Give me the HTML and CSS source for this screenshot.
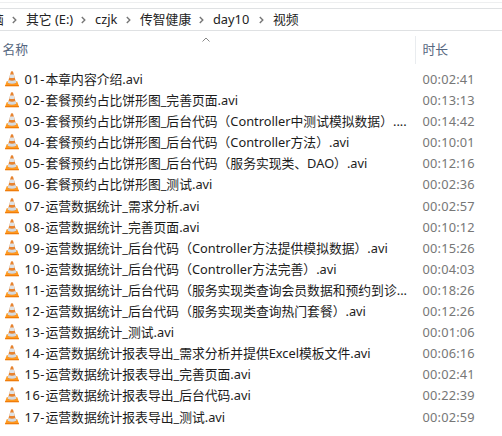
FILE: index.html
```
<!DOCTYPE html>
<html lang="zh-CN">
<head>
<meta charset="utf-8">
<title>视频</title>
<link rel="stylesheet" href="styles.css">
</head>
<body>
<div class="toolbar-edge"></div>
<nav class="breadcrumb">
  <span class="crumb first">脑</span>
  <svg class="chevron" viewBox="0 0 5 8"><path d="M.8 1l3 3-3 3"/></svg>
  <span class="crumb drive">其它 (E:)</span>
  <svg class="chevron" viewBox="0 0 5 8"><path d="M.8 1l3 3-3 3"/></svg>
  <span class="crumb folder">czjk</span>
  <svg class="chevron" viewBox="0 0 5 8"><path d="M.8 1l3 3-3 3"/></svg>
  <span class="crumb project">传智健康</span>
  <svg class="chevron" viewBox="0 0 5 8"><path d="M.8 1l3 3-3 3"/></svg>
  <span class="crumb day">day10</span>
  <svg class="chevron" viewBox="0 0 5 8"><path d="M.8 1l3 3-3 3"/></svg>
  <span class="crumb">视频</span>
</nav>
<header class="columns">
  <div class="column name-column">名称<svg class="sort" viewBox="0 0 8 5"><path d="M.5 4.5L4 1l3.500 3.500"/></svg></div>
  <div class="column">时长</div>
</header>
<main class="files" id="files"></main>
<script src="files.js"></script>
</body>
</html>
```
FILE: styles.css
```
* { box-sizing: border-box; }
body {
  margin: 0;
  width: 502px;
  height: 436px;
  overflow: hidden;
  background: #fff;
  color: #1c1c1c;
  font: 12.8px/21.1px "Noto Sans", "Noto Sans CJK SC", sans-serif;
}
.toolbar-edge { height: 3px; border-bottom: 1px solid #eeeff0; }
.breadcrumb {
  display: flex;
  align-items: center;
  height: 23px;
  margin-top: 5px;
  border-top: 1px solid #dfe1e3;
  border-bottom: 1px solid #dfe1e3;
  white-space: nowrap;
  color: #222;
}
.crumb { flex: none; }
.first { width: 13px; margin-left: -9px; }
.drive { width: 47px; }
.folder { width: 23px; }
.project { width: 51px; }
.day { width: 38px; }
.chevron {
  flex: none;
  width: 5px;
  height: 8px;
  margin: 0 9px 0 8px;
  fill: none;
  stroke: #777;
  stroke-width: 1.4;
}
.columns {
  display: grid;
  grid-template-columns: 416px 1fr;
  height: 38px;
  padding-top: 5px;
  color: #566780;
}
.column { height: 28px; padding: 3px 0 0 6.500px; }
.name-column {
  position: relative;
  padding-left: 2.500px;
  border-right: 1px solid #e9ecef;
}
.sort {
  position: absolute;
  left: 202px;
  top: 1px;
  width: 8px;
  height: 5px;
  fill: none;
  stroke: #888;
  stroke-width: 1;
}
.file {
  display: grid;
  grid-template-columns: 24.500px 21px 377px 1fr;
  height: 21.1px;
  white-space: nowrap;
}
.cone { width: 14px; height: 16px; margin: 2px 0 0 4.500px; }
.number { letter-spacing: .6px; }
.duration { color: #777; letter-spacing: .2px; }
```
FILE: files.js
```
const files = [
  ["01-", "本章内容介绍.avi", "00:02:41"],
  ["02-", "套餐预约占比饼形图_完善页面.avi", "00:13:13"],
  ["03-", "套餐预约占比饼形图_后台代码（Controller中测试模拟数据）....", "00:14:42"],
  ["04-", "套餐预约占比饼形图_后台代码（Controller方法）.avi", "00:10:01"],
  ["05-", "套餐预约占比饼形图_后台代码（服务实现类、DAO）.avi", "00:12:16"],
  ["06-", "套餐预约占比饼形图_测试.avi", "00:02:36"],
  ["07-", "运营数据统计_需求分析.avi", "00:02:57"],
  ["08-", "运营数据统计_完善页面.avi", "00:10:12"],
  ["09-", "运营数据统计_后台代码（Controller方法提供模拟数据）.avi", "00:15:26"],
  ["10-", "运营数据统计_后台代码（Controller方法完善）.avi", "00:04:03"],
  ["11-", "运营数据统计_后台代码（服务实现类查询会员数据和预约到诊...", "00:18:26"],
  ["12-", "运营数据统计_后台代码（服务实现类查询热门套餐）.avi", "00:12:26"],
  ["13-", "运营数据统计_测试.avi", "00:01:06"],
  ["14-", "运营数据统计报表导出_需求分析并提供Excel模板文件.avi", "00:06:16"],
  ["15-", "运营数据统计报表导出_完善页面.avi", "00:02:41"],
  ["16-", "运营数据统计报表导出_后台代码.avi", "00:22:39"],
  ["17-", "运营数据统计报表导出_测试.avi", "00:02:59"]
];

const cone = `<svg class="cone" viewBox="0 0 14 16">
  <path fill="#ff9a1f" d="M1.700 10.200h10.600l1.600 4.500H.1z"/>
  <path fill="#f07c0a" d="M.1 14h13.800v1.300H.1z"/>
  <path fill="#e8832e" d="M6 .6q1-.6 2 0l3.300 11.400q-4.300 2-8.600 0z"/>
  <path fill="#dfe3e6" d="M5.100 3.400h3.800l.9 3q-2.800 1.100-5.600 0z"/>
  <path fill="#d5dbe0" d="M3.500 9q3.500 1.300 7 0l.9 2.800q-4.400 1.900-8.800 0z"/>
</svg>`;

document.getElementById("files").innerHTML = files.map(([number, name, duration]) =>
  `<div class="file">${cone}<span class="number">${number}</span><span>${name}</span><span class="duration">${duration}</span></div>`
).join("");
```
